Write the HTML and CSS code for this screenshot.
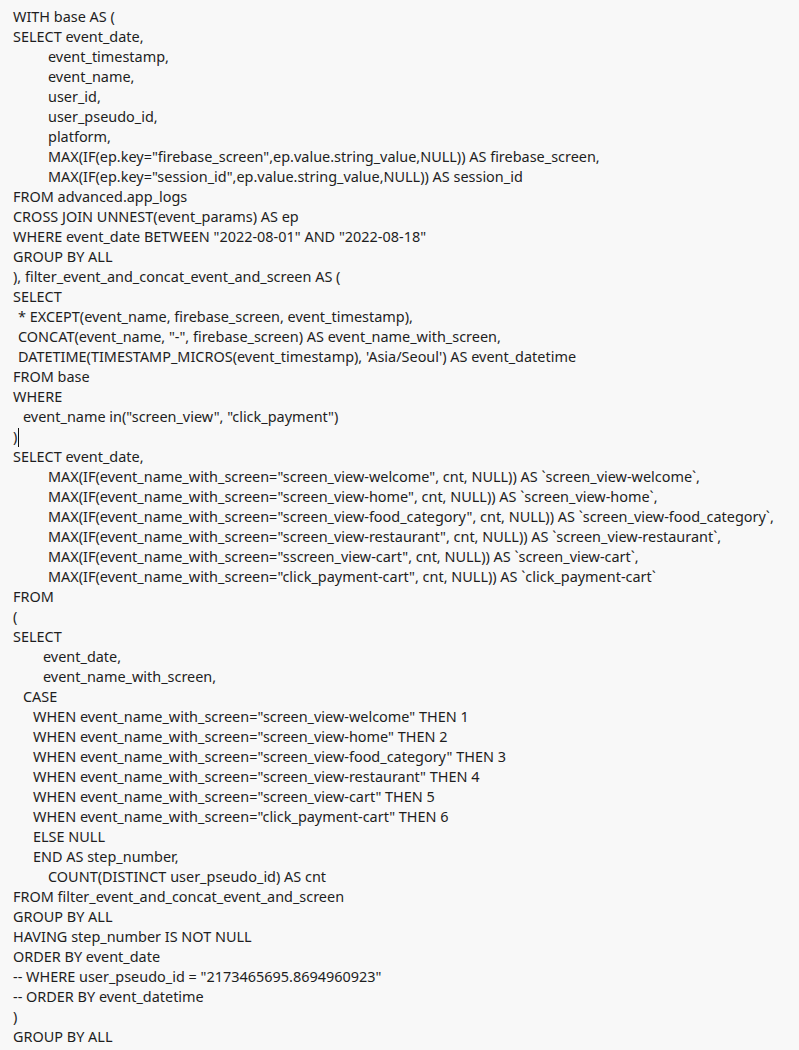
FILE: index.html
```html
<!DOCTYPE html>
<html>
<head>
<meta charset="utf-8">
<link rel="stylesheet" href="styles.css">
</head>
<body>
<div class="code">
<div class="ln">WITH base AS (</div>
<div class="ln">SELECT event_date,</div>
<div class="ln i7">event_timestamp,</div>
<div class="ln i7">event_name,</div>
<div class="ln i7">user_id,</div>
<div class="ln i7">user_pseudo_id,</div>
<div class="ln i7">platform,</div>
<div class="ln i7">MAX(IF(ep.key="firebase_screen",ep.value.string_value,NULL)) AS firebase_screen,</div>
<div class="ln i7">MAX(IF(ep.key="session_id",ep.value.string_value,NULL)) AS session_id</div>
<div class="ln">FROM advanced.app_logs</div>
<div class="ln">CROSS JOIN UNNEST(event_params) AS ep</div>
<div class="ln">WHERE event_date BETWEEN "2022-08-01" AND "2022-08-18"</div>
<div class="ln">GROUP BY ALL</div>
<div class="ln">), filter_event_and_concat_event_and_screen AS (</div>
<div class="ln">SELECT</div>
<div class="ln i1">* EXCEPT(event_name, firebase_screen, event_timestamp),</div>
<div class="ln i1">CONCAT(event_name, "-", firebase_screen) AS event_name_with_screen,</div>
<div class="ln i1">DATETIME(TIMESTAMP_MICROS(event_timestamp), 'Asia/Seoul') AS event_datetime</div>
<div class="ln">FROM base</div>
<div class="ln">WHERE</div>
<div class="ln i2">event_name in("screen_view", "click_payment")</div>
<div class="ln">)<span class="caret"></span></div>
<div class="ln">SELECT event_date,</div>
<div class="ln i7">MAX(IF(event_name_with_screen="screen_view-welcome", cnt, NULL)) AS `screen_view-welcome`,</div>
<div class="ln i7">MAX(IF(event_name_with_screen="screen_view-home", cnt, NULL)) AS `screen_view-home`,</div>
<div class="ln i7">MAX(IF(event_name_with_screen="screen_view-food_category", cnt, NULL)) AS `screen_view-food_category`,</div>
<div class="ln i7">MAX(IF(event_name_with_screen="screen_view-restaurant", cnt, NULL)) AS `screen_view-restaurant`,</div>
<div class="ln i7">MAX(IF(event_name_with_screen="sscreen_view-cart", cnt, NULL)) AS `screen_view-cart`,</div>
<div class="ln i7">MAX(IF(event_name_with_screen="click_payment-cart", cnt, NULL)) AS `click_payment-cart`</div>
<div class="ln">FROM</div>
<div class="ln">(</div>
<div class="ln">SELECT</div>
<div class="ln i6">event_date,</div>
<div class="ln i6">event_name_with_screen,</div>
<div class="ln i2">CASE</div>
<div class="ln i4">WHEN event_name_with_screen="screen_view-welcome" THEN 1</div>
<div class="ln i4">WHEN event_name_with_screen="screen_view-home" THEN 2</div>
<div class="ln i4">WHEN event_name_with_screen="screen_view-food_category" THEN 3</div>
<div class="ln i4">WHEN event_name_with_screen="screen_view-restaurant" THEN 4</div>
<div class="ln i4">WHEN event_name_with_screen="screen_view-cart" THEN 5</div>
<div class="ln i4">WHEN event_name_with_screen="click_payment-cart" THEN 6</div>
<div class="ln i4">ELSE NULL</div>
<div class="ln i4">END AS step_number,</div>
<div class="ln i7">COUNT(DISTINCT user_pseudo_id) AS cnt</div>
<div class="ln">FROM filter_event_and_concat_event_and_screen</div>
<div class="ln">GROUP BY ALL</div>
<div class="ln">HAVING step_number IS NOT NULL</div>
<div class="ln">ORDER BY event_date</div>
<div class="ln">-- WHERE user_pseudo_id = "2173465695.8694960923"</div>
<div class="ln">-- ORDER BY event_datetime</div>
<div class="ln">)</div>
<div class="ln">GROUP BY ALL</div>
</div>
</body>
</html>
```

FILE: styles.css
```css
html, body {
  margin: 0;
  padding: 0;
  background: #f8f8f8;
}
.code {
  background: #f8f8f8;
  border-bottom: 1px solid #e2e2e2;
  padding: 7px 0 6px 13px;
  font-family: "Noto Sans", sans-serif;
  font-size: 14.45px;
  line-height: 20px;
  color: #1e1e1e;
  white-space: nowrap;
}
.ln { height: 20px; }
.i1 { padding-left: 5px; }
.i2 { padding-left: 10px; }
.i4 { padding-left: 20px; }
.i6 { padding-left: 30px; }
.i7 { padding-left: 35px; }
.caret {
  display: inline-block;
  width: 0;
  height: 19px;
  border-left: 1px solid #111;
  vertical-align: -5px;
  margin-left: 1px;
}
```
